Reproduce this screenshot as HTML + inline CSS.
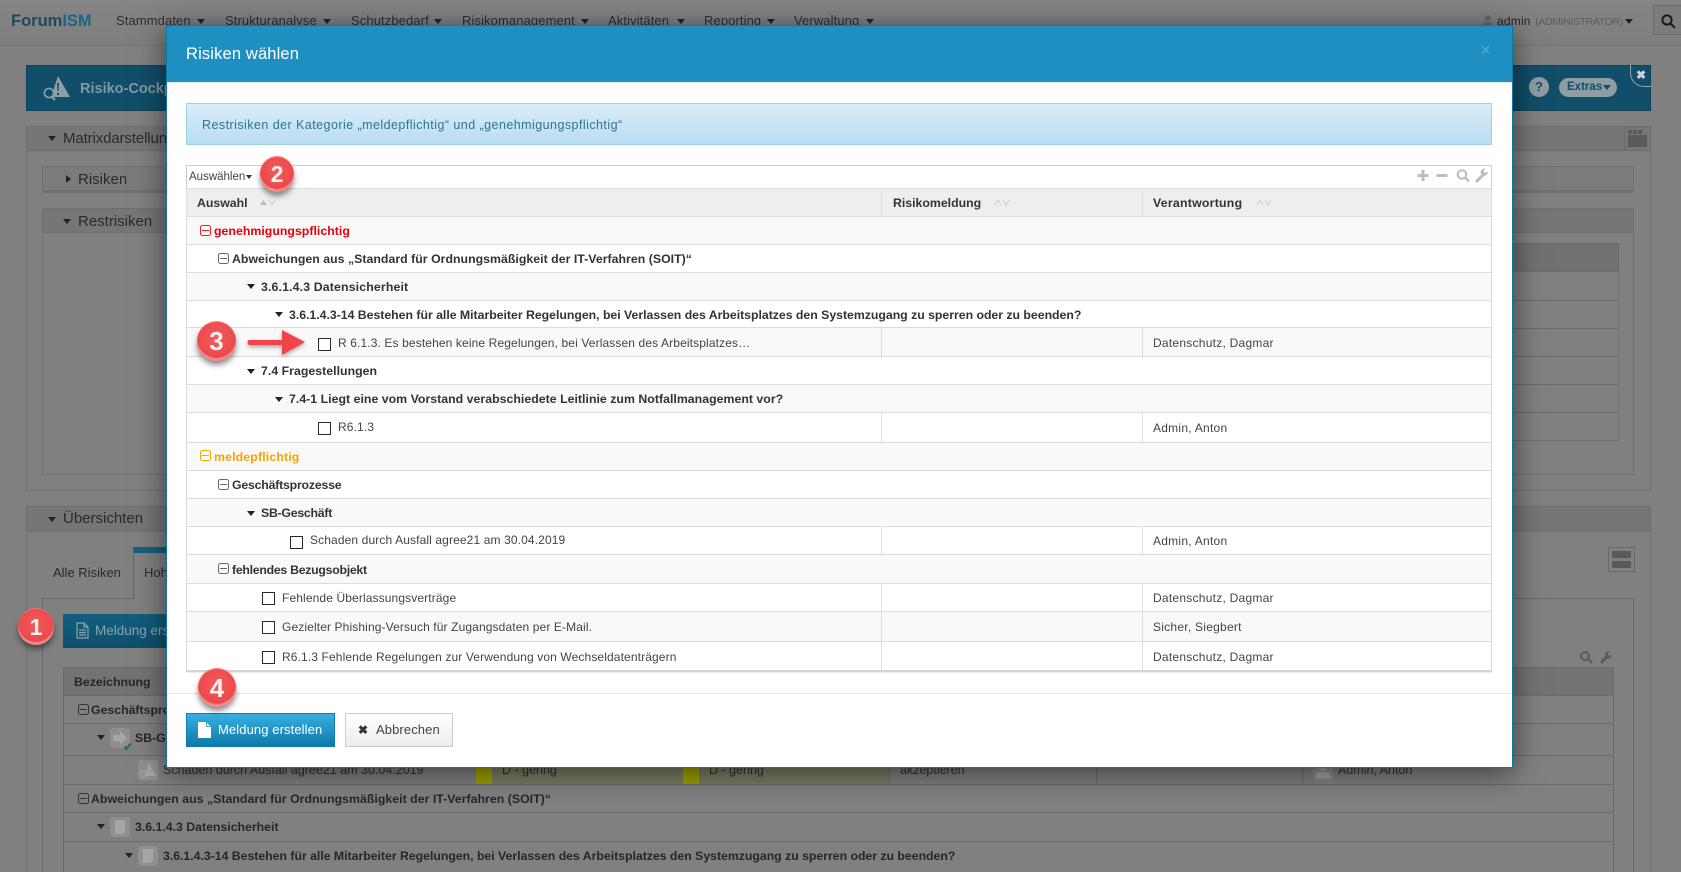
<!DOCTYPE html>
<html lang="de"><head><meta charset="utf-8"><title>Risiken wählen</title>
<style>
*{box-sizing:border-box}
html,body{margin:0;padding:0;width:1681px;height:872px;overflow:hidden}
body{font-family:"Liberation Sans",sans-serif;font-size:12px;color:#2b2b2b;background:#808080}
#page{position:relative;width:1681px;height:872px;overflow:hidden;background:#808080}
.a{position:absolute}
.t{position:absolute;white-space:nowrap;line-height:16px}
.car{position:absolute;width:0;height:0;border-left:4px solid transparent;border-right:4px solid transparent;border-top:5px solid #222}
.box{position:absolute;border:1px solid #6f6f6f}
.nav{top:13px;font-size:13px;color:#2e2e2e;letter-spacing:.1px}
.bk{font-weight:bold;font-size:12.3px;color:#262626}
.modal{position:absolute;left:166px;top:25px;width:1347px;height:743px;background:#fff;border:1px solid #0d76a5;box-shadow:0 5px 28px rgba(0,0,0,.55)}
.in{position:absolute;left:-167px;top:-26px;width:1681px;height:872px}
.row{position:absolute;left:186px;width:1306px;border:1px solid #dcdcdc;border-width:0 1px 1px 1px;box-shadow:0 1px 0 #ececec;background:#fff}
.row.o{background:#f9f9f9}
.row span{position:absolute;white-space:nowrap;top:1px;bottom:0;display:flex;align-items:center}
.row b{color:#333;font-size:12.3px;letter-spacing:.03px}
.row i{position:absolute;top:0;bottom:0;width:1px;background:#ddd}
.r{font-size:12px;color:#444;letter-spacing:.12px}
.rr{font-size:12px;color:#444;letter-spacing:.25px}
.cb{position:absolute;width:13px;height:13px;border:1px solid #2a2a2a;background:#fff}
.mi{position:absolute;width:11px;height:11px;border:1px solid #666;border-radius:2.5px}
.mi:after{content:"";position:absolute;left:1px;right:1px;top:3.5px;height:1px;background:currentColor}
.badge{position:absolute;border-radius:50%;background:radial-gradient(circle at 50% 40%,#f45b5b 0,#ec4a4c 60%,#d9393d 100%);box-shadow:0 -1px 0 #f77,inset 0 -3px 0 #f08a8a,0 4px 6px rgba(0,0,0,.45);color:#f2f2f2;font-weight:bold;text-align:center}
.th{position:absolute;top:188px;height:29px;line-height:30px;font-weight:bold;font-size:12.3px;color:#333}
</style></head>
<body>
<div id="page">
<!-- top nav -->
<div class="a" style="left:0;top:0;width:1681px;height:46px;background:linear-gradient(#858585,#7e7e7e);border-bottom:1px solid #737373"></div>
<div class="t" style="left:11px;top:13px;font-size:16.5px;font-weight:bold;color:#1c4a5e">Forum<span style="color:#1b6485">ISM</span></div>
<div class="t nav" style="left:116px">Stammdaten</div><div class="car" style="left:197px;top:19px"></div>
<div class="t nav" style="left:225px">Strukturanalyse</div><div class="car" style="left:323px;top:19px"></div>
<div class="t nav" style="left:351px">Schutzbedarf</div><div class="car" style="left:434px;top:19px"></div>
<div class="t nav" style="left:462px">Risikomanagement</div><div class="car" style="left:581px;top:19px"></div>
<div class="t nav" style="left:608px">Aktivitäten</div><div class="car" style="left:677px;top:19px"></div>
<div class="t nav" style="left:704px">Reporting</div><div class="car" style="left:767px;top:19px"></div>
<div class="t nav" style="left:794px">Verwaltung</div><div class="car" style="left:866px;top:19px"></div>
<svg class="a" style="left:1482px;top:15px" width="11" height="12" viewBox="0 0 11 12"><circle cx="5.500" cy="3" r="3" fill="#6a6a6a"/><path d="M1 12V9q0-2 3-2h3q3 0 3 2v3z" fill="#6a6a6a"/></svg>
<div class="t" style="left:1497px;top:13px;font-size:12px;color:#222;letter-spacing:.2px">admin <span style="color:#5c5c5c;font-size:10.5px;letter-spacing:-.35px;margin-left:1px">(ADMINISTRATOR)</span></div>
<div class="car" style="left:1625px;top:19px"></div>
<div class="a" style="left:1653px;top:5px;width:30px;height:30px;border:1px solid #6c6c6c;background:#7c7c7c"></div>
<svg class="a" style="left:1661px;top:14px" width="15" height="15" viewBox="0 0 15 15" fill="none" stroke="#1b1b1b" stroke-width="2"><circle cx="6" cy="6" r="4.600"/><path d="M9.500 9.500l4.500 4.500"/></svg>

<!-- cockpit banner -->
<div class="a" style="left:26px;top:65px;width:1625px;height:46px;background:#114e69;border:1px solid #0e4258"></div>
<svg class="a" style="left:43px;top:75px" width="28" height="26" viewBox="0 0 28 26"><path d="M15 1l12 21H8z" fill="#8d9ea6"/><path d="M14 8h2l-.4 8h-1.200zM14 18h2v2h-2z" fill="#114e69"/><circle cx="6" cy="18" r="4.600" fill="#114e69" stroke="#8d9ea6" stroke-width="1.600"/><path d="M9 22l3 3" stroke="#8d9ea6" stroke-width="2"/></svg>
<div class="t" style="left:80px;top:81px;font-size:14.5px;font-weight:bold;color:#7f9aa7">Risiko-Cockpit</div>
<div class="a" style="left:1529px;top:77px;width:20px;height:20px;border-radius:50%;background:#8f9ca2;color:#114e69;font-weight:bold;font-size:13px;text-align:center;line-height:20px">?</div>
<div class="a" style="left:1559px;top:78px;width:58px;height:19px;border-radius:10px;background:#8f9ca2;color:#114e69;font-weight:bold;font-size:11.5px;line-height:19px;padding-left:8px">Extras</div>
<div class="a" style="left:1603px;top:85px;width:0;height:0;border-left:4px solid transparent;border-right:4px solid transparent;border-top:5px solid #114e69"></div>
<div class="a" style="left:1630px;top:65px;width:21px;height:22px;border-left:1.500px solid #94a7af;border-bottom:1.500px solid #94a7af;border-bottom-left-radius:14px;color:#cfd6d9;font-weight:bold;font-size:12px;line-height:20px;text-align:center">✖</div>

<!-- matrix panel -->
<div class="box" style="left:26px;top:126px;width:1625px;height:365px"></div>
<div class="a" style="left:26px;top:126px;width:1625px;height:25px;background:#767676;border:1px solid #6f6f6f"></div>
<div class="car" style="left:48px;top:136px"></div>
<div class="t" style="left:63px;top:131px;font-size:15px;color:#2a2a2a;letter-spacing:-.12px">Matrixdarstellung</div>
<div class="a" style="left:1624px;top:126px;width:27px;height:25px;border:1px solid #6a6a6a"></div>
<div class="a" style="left:1628px;top:130px;width:4px;height:4px;background:#5a5a5a"></div>
<div class="a" style="left:1633px;top:130px;width:4px;height:4px;background:#5a5a5a"></div>
<div class="a" style="left:1638px;top:130px;width:4px;height:4px;background:#5a5a5a"></div>
<div class="a" style="left:1628px;top:135px;width:19px;height:12px;background:#5a5a5a"></div>
<div class="a" style="left:42px;top:166px;width:1592px;height:27px;background:#7b7b7b;border:1px solid #6f6f6f;border-bottom:3px solid #6f6f6f"></div>
<div class="a" style="left:66px;top:175px;width:0;height:0;border-top:4px solid transparent;border-bottom:4px solid transparent;border-left:5px solid #222"></div>
<div class="t" style="left:78px;top:172px;font-size:15px;color:#2a2a2a">Risiken</div>
<div class="box" style="left:42px;top:208px;width:1592px;height:267px"></div>
<div class="a" style="left:42px;top:208px;width:1592px;height:25px;background:#767676;border:1px solid #6f6f6f"></div>
<div class="car" style="left:63px;top:219px"></div>
<div class="t" style="left:78px;top:214px;font-size:15px;color:#2a2a2a">Restrisiken</div>
<div class="box" style="left:1400px;top:243px;width:219px;height:198px"></div>
<div class="a" style="left:1400px;top:243px;width:219px;height:29px;background:#717171;border:1px solid #6a6a6a"></div>
<div class="a" style="left:1400px;top:300px;width:219px;height:1px;background:#6a6a6a"></div>
<div class="a" style="left:1400px;top:328px;width:219px;height:1px;background:#6a6a6a"></div>
<div class="a" style="left:1400px;top:356px;width:219px;height:1px;background:#6a6a6a"></div>
<div class="a" style="left:1400px;top:384px;width:219px;height:1px;background:#6a6a6a"></div>
<div class="a" style="left:1400px;top:412px;width:219px;height:1px;background:#6a6a6a"></div>

<!-- uebersichten panel -->
<div class="a" style="left:26px;top:506px;width:1625px;height:366px;border:1px solid #6f6f6f;border-bottom:0"></div>
<div class="a" style="left:26px;top:506px;width:1625px;height:26px;background:#767676;border:1px solid #6f6f6f"></div>
<div class="car" style="left:48px;top:517px"></div>
<div class="t" style="left:63px;top:511px;font-size:15px;color:#2a2a2a">Übersichten</div>
<div class="a" style="left:1608px;top:547px;width:27px;height:25px;border:1px solid #6a6a6a"></div>
<div class="a" style="left:1612px;top:551px;width:19px;height:7px;background:#5a5a5a"></div>
<div class="a" style="left:1612px;top:561px;width:19px;height:7px;background:#5a5a5a"></div>
<div class="t" style="left:53px;top:565px;font-size:13px;color:#2a2a2a">Alle Risiken</div>
<div class="a" style="left:42px;top:598px;width:1592px;height:274px;border:1px solid #686868;border-bottom:0"></div>
<div class="a" style="left:133px;top:547px;width:200px;height:52px;border-left:1px solid #666;border-top:6px solid #15607f;background:#808080"></div>
<div class="t" style="left:144px;top:565px;font-size:13px;color:#2a2a2a">Hohe Risiken</div>
<div class="a" style="left:63px;top:614px;width:200px;height:34px;background:linear-gradient(#125f80,#0e4f6c)"></div>
<svg class="a" style="left:76px;top:622px" width="13" height="17" viewBox="0 0 13 17" fill="none" stroke="#8ca3ae" stroke-width="1.200"><path d="M1 1h7l4 4v11H1zM8 1v4h4M3 8h7M3 10.500h7M3 13h7"/></svg>
<div class="t" style="left:95px;top:623px;font-size:13.5px;color:#8ba3ae">Meldung erstellen</div>
<div class="a" style="left:1579px;top:650px"><svg width="34" height="14" viewBox="0 0 34 14" fill="none" stroke="#5c5c5c" stroke-width="2"><circle cx="6" cy="6" r="4"/><path d="M9 9l4 4"/><path d="M22 13l6-7" stroke-width="3"/><path d="M26 4q1-3 5-3l-2 3 1 2 3-1q-1 4-5 4z" fill="#5c5c5c" stroke="none"/></svg></div>
<div class="a" style="left:63px;top:667px;width:1551px;height:205px;border:1px solid #6b6b6b;border-bottom:0"></div>
<div class="a" style="left:63px;top:667px;width:1551px;height:29px;background:#737373;border:1px solid #6b6b6b"></div>
<div class="t bk" style="left:74px;top:674px">Bezeichnung</div>
<div class="a" style="left:64px;top:723px;width:1550px;height:1px;background:#6b6b6b"></div>
<div class="a" style="left:64px;top:755px;width:1550px;height:1px;background:#6b6b6b"></div>
<div class="a" style="left:64px;top:784px;width:1550px;height:1px;background:#6b6b6b"></div>
<div class="a" style="left:64px;top:812px;width:1550px;height:1px;background:#6b6b6b"></div>
<div class="a" style="left:64px;top:841px;width:1550px;height:1px;background:#6b6b6b"></div>
<div class="mi" style="left:78px;top:704px;color:#333;border-color:#333"></div>
<div class="t bk" style="left:91px;top:702px">Geschäftsprozesse</div>
<div class="car" style="left:97px;top:735px"></div>
<svg class="a" style="left:110px;top:728px" width="20" height="20" viewBox="0 0 20 20"><rect width="20" height="20" rx="3" fill="#8f8f8f"/><path d="M3 7h7V3l7 7-7 7v-4H3z" fill="#a6a6a6"/></svg>
<div class="t" style="left:123px;top:739px;color:#1d7a22;font-weight:bold;font-size:12px">✔</div>
<div class="t bk" style="left:135px;top:730px">SB-Geschäft</div>
<svg class="a" style="left:138px;top:760px" width="20" height="20" viewBox="0 0 20 20"><rect width="20" height="20" rx="3" fill="#8f8f8f"/><path d="M11 3l7 13H6z" fill="#a6a6a6"/><circle cx="6" cy="14" r="3" fill="none" stroke="#a6a6a6"/></svg>
<div class="t" style="left:163px;top:762px;font-size:12.5px;color:#2f2f2f">Schaden durch Ausfall agree21 am 30.04.2019</div>
<div class="a" style="left:476px;top:756px;width:413px;height:28px;background:#7c7c64"></div>
<div class="a" style="left:476px;top:756px;width:16px;height:28px;background:#a0a000"></div>
<div class="a" style="left:683px;top:756px;width:16px;height:28px;background:#a0a000"></div>
<div class="t" style="left:502px;top:762px;font-size:12.5px;color:#2f2f2f">D - gering</div>
<div class="t" style="left:709px;top:762px;font-size:12.5px;color:#2f2f2f">D - gering</div>
<div class="a" style="left:889px;top:756px;width:1px;height:28px;background:#6b6b6b"></div>
<div class="a" style="left:1096px;top:756px;width:1px;height:28px;background:#6b6b6b"></div>
<div class="a" style="left:1302px;top:756px;width:1px;height:28px;background:#6b6b6b"></div>
<div class="t" style="left:900px;top:762px;font-size:12.5px;color:#2f2f2f">akzeptieren</div>
<svg class="a" style="left:1313px;top:760px" width="20" height="20" viewBox="0 0 20 20"><rect width="20" height="20" rx="3" fill="#8f8f8f"/><circle cx="10" cy="7" r="4" fill="#a6a6a6"/><path d="M3 18v-3q0-3 4-3h6q4 0 4 3v3z" fill="#a6a6a6"/></svg>
<div class="t" style="left:1338px;top:762px;font-size:12.5px;color:#2f2f2f">Admin, Anton</div>
<div class="mi" style="left:78px;top:793px;color:#333;border-color:#333"></div>
<div class="t bk" style="left:91px;top:791px;letter-spacing:.03px">Abweichungen aus „Standard für Ordnungsmäßigkeit der IT-Verfahren (SOIT)“</div>
<div class="car" style="left:97px;top:824px"></div>
<svg class="a" style="left:110px;top:817px" width="20" height="20" viewBox="0 0 20 20"><rect width="20" height="20" rx="3" fill="#8f8f8f"/><path d="M5 3h10v12l-3 2H5z" fill="#a6a6a6"/></svg>
<div class="t bk" style="left:135px;top:819px">3.6.1.4.3 Datensicherheit</div>
<div class="car" style="left:125px;top:853px"></div>
<svg class="a" style="left:138px;top:846px" width="20" height="20" viewBox="0 0 20 20"><rect width="20" height="20" rx="3" fill="#8f8f8f"/><path d="M5 3h10v12l-3 2H5z" fill="#a6a6a6"/></svg>
<div class="t bk" style="left:163px;top:848px;letter-spacing:-.02px">3.6.1.4.3-14 Bestehen für alle Mitarbeiter Regelungen, bei Verlassen des Arbeitsplatzes den Systemzugang zu sperren oder zu beenden?</div>

<!-- modal -->
<div class="modal"><div class="in">
  <div class="a" style="left:167px;top:26px;width:1345px;height:56px;background:#1f8fc1"></div>
  <div class="a" style="left:167px;top:82px;width:1345px;height:1px;background:#e4eef3"></div>
  <div class="t" style="left:186px;top:46px;font-size:16.5px;color:#fff;letter-spacing:.15px">Risiken wählen</div>
  <div class="t" style="left:1481px;top:43px;font-size:16px;color:#4fa3c8;font-weight:bold">×</div>
  <div class="a" style="left:186px;top:103px;width:1306px;height:42px;background:linear-gradient(#d9ecf7,#b9def1);border:1px solid #9bd0e6"></div>
  <div class="t" style="left:202px;top:117px;font-size:12.5px;color:#2f7396;letter-spacing:.45px">Restrisiken der Kategorie „meldepflichtig“ und „genehmigungspflichtig“</div>

  <div class="a" style="left:186px;top:165px;width:1306px;height:24px;border:1px solid #ccc;border-bottom:1px solid #ddd;background:#fff"></div>
  <div class="t" style="left:189px;top:169px;font-size:11.5px;color:#444">Auswählen</div>
  <div class="car" style="left:246px;top:175px;border-top-color:#333;border-left-width:3.500px;border-right-width:3.500px;border-top-width:4px"></div>
  <svg class="a" style="left:1416px;top:167px" width="74" height="17" viewBox="0 0 74 17" fill="none" stroke="#bdbdbd"><path d="M7 3v11M1.500 8.500h11" stroke-width="3"/><path d="M20.500 8.500h11" stroke-width="3"/><circle cx="46" cy="7.500" r="4.300" stroke-width="2"/><path d="M49 10.500l4 4" stroke-width="2.400"/><path d="M60 15l7-7" stroke-width="3"/><path d="M64.500 6q0-4 5-5l-2 3 1.500 2 3-1.500q-.5 4.500-5 4.500z" fill="#bdbdbd" stroke="none"/></svg>

  <div class="a" style="left:186px;top:188px;width:1306px;height:29px;background:#eee;border:1px solid #ddd;border-width:1px 1px 1px 1px"></div>
  <div class="a" style="left:881px;top:189px;width:1px;height:27px;background:#ddd"></div>
  <div class="a" style="left:1142px;top:189px;width:1px;height:27px;background:#ddd"></div>
  <div class="th" style="left:197px">Auswahl</div>
  <div class="th" style="left:893px">Risikomeldung</div>
  <div class="th" style="left:1153px;letter-spacing:.25px">Verantwortung</div>
  <svg class="a" style="left:260px;top:199px" width="16" height="7" viewBox="0 0 16 7"><path d="M0 6l3.500-5L7 6z" fill="#bbb"/><path d="M9 1l3 5 3-5" fill="none" stroke="#ccc"/></svg>
  <svg class="a" style="left:994px;top:199px" width="16" height="7" viewBox="0 0 16 7" fill="none" stroke="#ccc"><path d="M1 6l3-5 3 5M9 1l3 5 3-5"/></svg>
  <svg class="a" style="left:1256px;top:199px" width="16" height="7" viewBox="0 0 16 7" fill="none" stroke="#ccc"><path d="M1 6l3-5 3 5M9 1l3 5 3-5"/></svg>

  <div class="row o" style="top:217px;height:28px"><div class="mi" style="left:13px;top:8px;border-color:#ee1c25;color:#ee1c25"></div><span style="left:27px"><b style="color:#e8000b">genehmigungspflichtig</b></span></div>
  <div class="row" style="top:245px;height:28px"><div class="mi" style="left:31px;top:8px;color:#666"></div><span style="left:45px"><b>Abweichungen aus „Standard für Ordnungsmäßigkeit der IT-Verfahren (SOIT)“</b></span></div>
  <div class="row o" style="top:273px;height:28px"><div class="car" style="left:60px;top:11px"></div><span style="left:74px"><b style="letter-spacing:.15px">3.6.1.4.3 Datensicherheit</b></span></div>
  <div class="row" style="top:301px;height:27px"><div class="car" style="left:88px;top:11px"></div><span style="left:102px"><b style="letter-spacing:-.02px">3.6.1.4.3-14 Bestehen für alle Mitarbeiter Regelungen, bei Verlassen des Arbeitsplatzes den Systemzugang zu sperren oder zu beenden?</b></span></div>
  <div class="row o" style="top:328px;height:29px"><i style="left:694px"></i><i style="left:955px"></i><div class="cb" style="left:131px;top:10px"></div><span style="left:151px" class="r">R 6.1.3. Es bestehen keine Regelungen, bei Verlassen des Arbeitsplatzes…</span><span style="left:966px" class="rr">Datenschutz, Dagmar</span></div>
  <div class="row" style="top:357px;height:28px"><div class="car" style="left:60px;top:12px"></div><span style="left:74px"><b>7.4 Fragestellungen</b></span></div>
  <div class="row o" style="top:385px;height:28px"><div class="car" style="left:88px;top:12px"></div><span style="left:102px"><b>7.4-1 Liegt eine vom Vorstand verabschiedete Leitlinie zum Notfallmanagement vor?</b></span></div>
  <div class="row" style="top:413px;height:30px"><i style="left:694px"></i><i style="left:955px"></i><div class="cb" style="left:131px;top:9px"></div><span style="left:151px;bottom:2px" class="r">R6.1.3</span><span style="left:966px" class="rr">Admin, Anton</span></div>
  <div class="row o" style="top:443px;height:28px"><div class="mi" style="left:13px;top:7px;border-color:#f7a800;color:#f7a800"></div><span style="left:27px"><b style="color:#f7a300;letter-spacing:.15px">meldepflichtig</b></span></div>
  <div class="row" style="top:471px;height:28px"><div class="mi" style="left:31px;top:8px;color:#666"></div><span style="left:45px"><b style="letter-spacing:-.2px">Geschäftsprozesse</b></span></div>
  <div class="row o" style="top:499px;height:28px"><div class="car" style="left:60px;top:12px"></div><span style="left:74px"><b style="letter-spacing:-.25px">SB-Geschäft</b></span></div>
  <div class="row" style="top:527px;height:28px"><i style="left:694px"></i><i style="left:955px"></i><div class="cb" style="left:103px;top:9px"></div><span style="left:123px;bottom:2px" class="r">Schaden durch Ausfall agree21 am 30.04.2019</span><span style="left:966px" class="rr">Admin, Anton</span></div>
  <div class="row o" style="top:555px;height:29px"><div class="mi" style="left:31px;top:8px;color:#666"></div><span style="left:45px"><b style="letter-spacing:-.27px">fehlendes Bezugsobjekt</b></span></div>
  <div class="row" style="top:584px;height:28px"><i style="left:694px"></i><i style="left:955px"></i><div class="cb" style="left:75px;top:8px"></div><span style="left:95px" class="r">Fehlende Überlassungsverträge</span><span style="left:966px" class="rr">Datenschutz, Dagmar</span></div>
  <div class="row o" style="top:612px;height:30px"><i style="left:694px"></i><i style="left:955px"></i><div class="cb" style="left:75px;top:9px"></div><span style="left:95px" class="r">Gezielter Phishing-Versuch für Zugangsdaten per E-Mail.</span><span style="left:966px" class="rr">Sicher, Siegbert</span></div>
  <div class="row" style="top:642px;height:30px;border-bottom:2px solid #d4d4d4"><i style="left:694px"></i><i style="left:955px"></i><div class="cb" style="left:75px;top:9px"></div><span style="left:95px" class="r">R6.1.3 Fehlende Regelungen zur Verwendung von Wechseldatenträgern</span><span style="left:966px" class="rr">Datenschutz, Dagmar</span></div>

  <div class="a" style="left:167px;top:693px;width:1345px;height:1px;background:#e5e5e5"></div>
  <div class="a" style="left:186px;top:713px;width:149px;height:34px;background:linear-gradient(#38afe2,#0c7aaa);border:1px solid #0f7cab"></div>
  <svg class="a" style="left:198px;top:722px" width="13" height="16" viewBox="0 0 13 16"><path d="M0 0h8l5 5v11H0z" fill="#fff"/><path d="M8.500 0v4.500H13" fill="none" stroke="#2a94c4" stroke-width=".8"/></svg>
  <div class="t" style="left:218px;top:722px;font-size:13px;color:#fff;letter-spacing:.1px">Meldung erstellen</div>
  <div class="a" style="left:345px;top:713px;width:108px;height:34px;background:linear-gradient(#fff,#ececec);border:1px solid #ccc"></div>
  <div class="t" style="left:358px;top:722px;font-size:12px;color:#333;font-weight:bold">✖</div>
  <div class="t" style="left:376px;top:722px;font-size:13px;color:#444;letter-spacing:.1px">Abbrechen</div>
</div></div>

<!-- annotations -->
<svg class="a" style="left:246px;top:325px;overflow:visible" width="64" height="36" viewBox="0 0 64 36"><path d="M4 15h32V5l23 12-23 13v-10H4q-2.500 0-2.500-2.500T4 15z" fill="#f2434b" style="filter:drop-shadow(0 2px 2px rgba(0,0,0,.35))"/></svg>
<div class="badge" style="left:18px;top:609px;width:36px;height:36px;line-height:36px;font-size:23px">1</div>
<div class="badge" style="left:260px;top:157px;width:34px;height:35px;line-height:34px;font-size:23px">2</div>
<div class="badge" style="left:197px;top:322px;width:39px;height:39px;line-height:39px;font-size:26px">3</div>
<div class="badge" style="left:198px;top:669px;width:38px;height:38px;line-height:38px;font-size:26px">4</div>
</div>
</body></html>
